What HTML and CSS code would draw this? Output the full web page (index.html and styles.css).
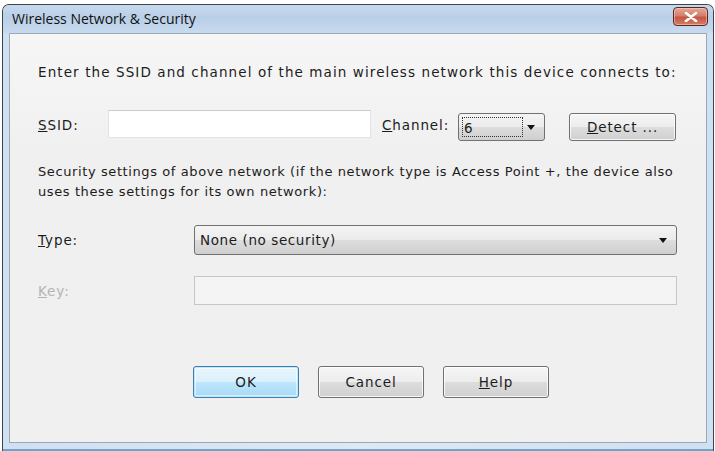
FILE: index.html
```html
<!DOCTYPE html>
<html>
<head>
<meta charset="utf-8">
<title>Wireless Network &amp; Security</title>
<link rel="stylesheet" href="styles.css">
</head>
<body>
<div class="window">
  <div class="titlebar">
    <span class="title">Wireless Network &amp; Security</span>
    <button class="close" aria-label="Close">
      <svg width="14" height="10" viewBox="0 0 14 10"><path d="M2 1 L12 9 M12 1 L2 9" stroke="#fff" stroke-width="2.6" stroke-linecap="round"/></svg>
    </button>
  </div>
  <div class="frame">
    <div class="client">
      <p class="intro">Enter the SSID and channel of the main wireless network this device connects to:</p>
      <div class="row row-ssid">
        <label class="label lbl-ssid"><u>S</u>SID:</label>
        <div class="edit edit-ssid"></div>
        <label class="label lbl-channel"><u>C</u>hannel:</label>
        <div class="combo combo-channel"><span class="focus">6</span><span class="arrow"></span></div>
        <button class="btn btn-detect"><u>D</u>etect ...</button>
      </div>
      <p class="sec">Security settings of above network (if the network type is Access Point +, the device also<br>uses these settings for its own network):</p>
      <div class="row row-type">
        <label class="label lbl-wide"><u>T</u>ype:</label>
        <div class="combo combo-type"><span class="val">None (no security)</span><span class="arrow"></span></div>
      </div>
      <div class="row row-key">
        <label class="label lbl-wide disabled"><u>K</u>ey:</label>
        <div class="edit edit-key"></div>
      </div>
      <div class="buttons">
        <button class="btn btn-default">OK</button>
        <button class="btn">Cancel</button>
        <button class="btn"><u>H</u>elp</button>
      </div>
    </div>
  </div>
</div>
</body>
</html>
```

FILE: styles.css
```css
html, body {
  margin: 0;
  padding: 0;
  background: #ffffff;
}
body {
  width: 715px;
  height: 451px;
  overflow: hidden;
  font-family: "DejaVu Sans", Verdana, sans-serif;
  font-size: 13.5px;
  letter-spacing: 0.9px;
  color: #1c1c1c;
}
.window {
  margin: 4px 1px 0 2px;
  height: 446px;
  border: 1px solid #3b4450;
  border-bottom: none;
  border-radius: 7px 7px 0 0;
  background: linear-gradient(to bottom, #bcd2ea 0px, #d3e2f2 20px, #dbe8f5 40px, #e0ebf6 100%);
  display: flex;
  flex-direction: column;
  overflow: hidden;
}
.titlebar {
  height: 28px;
  display: flex;
  align-items: center;
  justify-content: space-between;
  padding: 0 5px 0 9px;
  background: linear-gradient(to bottom, #c7d9ee 0%, #b9cfe8 45%, #c8daee 100%);
}
.title {
  font-family: "Open Sans", "Noto Sans", sans-serif;
  font-size: 14px;
  letter-spacing: 0;
  color: #111;
  margin-top: -2px;
}
.close {
  width: 35px;
  height: 19px;
  margin-top: -5px;
  padding: 0;
  border: 1px solid #5b2620;
  border-radius: 4px;
  background: linear-gradient(to bottom, #e4a797 0%, #d47f6d 45%, #c45642 55%, #d77d66 100%);
  display: flex;
  align-items: center;
  justify-content: center;
  box-shadow: inset 0 0 0 1px rgba(255,220,210,0.5);
}
.frame {
  flex: 1;
  padding: 0 6px 6px 6px;
  background: linear-gradient(to right, #cfe0f1, #dde9f5 50%, #cfe0f1);
  border-bottom: 2px solid #6ea6c8;
}
.client {
  height: 100%;
  box-sizing: border-box;
  border: 1px solid #9aa8b8;
  background: linear-gradient(to bottom, #f6f6f6 0%, #f0f0f0 30%, #f0f0f0 100%);
  padding: 29px 28px 0 28px;
}
.intro {
  margin: 0;
  line-height: 18px;
  white-space: nowrap;
  letter-spacing: 1.1px;
}
.row {
  display: flex;
  align-items: center;
}
.row-ssid {
  margin-top: 29px;
  height: 30px;
}
.label {
  flex: none;
}
.lbl-ssid { width: 70px; }
.lbl-channel { margin-left: 11px; width: 76px; }
.lbl-wide { width: 156px; }
.disabled { color: #b4b4b4; }
.edit {
  box-sizing: border-box;
  background: #fff;
  border: 1px solid #abadb3;
  border-top-color: #e3e3e3;
}
.edit-ssid {
  width: 263px;
  height: 28px;
  border-color: #e2e3ea;
  border-top-color: #c9ccd1;
  margin-top: -2px;
}
.edit-key {
  width: 483px;
  height: 29px;
  background: #f4f4f4;
  border-color: #c6c6c6;
}
.combo {
  box-sizing: border-box;
  position: relative;
  border: 1px solid #707070;
  border-radius: 3px;
  background: linear-gradient(to bottom, #f4f4f4 0%, #ebebeb 50%, #dddddd 51%, #cfcfcf 100%);
  display: flex;
  align-items: center;
}
.combo-channel {
  width: 87px;
  height: 28px;
  margin-top: 3px;
  padding-left: 3px;
}
.focus {
  display: block;
  width: 61px;
  height: 20px;
  line-height: 20px;
  box-sizing: border-box;
  border: 1px dotted #333;
  padding-left: 1px;
}
.combo-type {
  width: 483px;
  height: 30px;
  padding-left: 5px;
  letter-spacing: 0.6px;
}
.arrow {
  position: absolute;
  right: 9px;
  top: 50%;
  margin-top: -2px;
  width: 0;
  height: 0;
  border-left: 4px solid transparent;
  border-right: 4px solid transparent;
  border-top: 5px solid #111;
}
.btn {
  box-sizing: border-box;
  width: 107px;
  height: 28px;
  padding: 0;
  font-family: inherit;
  font-size: inherit;
  letter-spacing: inherit;
  color: #1c1c1c;
  border: 1px solid #707070;
  border-radius: 3px;
  background: linear-gradient(to bottom, #f6f6f6 0%, #ececec 50%, #dddddd 51%, #d0d0d0 100%);
  box-shadow: inset 0 0 0 1px rgba(255,255,255,0.8);
}
.btn-detect {
  margin-left: 24px;
  margin-top: 3px;
}
.row-type {
  margin-top: 23px;
  height: 30px;
}
.row-key {
  margin-top: 21px;
  height: 29px;
}
.sec {
  margin: 22px 0 0 0;
  line-height: 20px;
  font-size: 13px;
  letter-spacing: 0.6px;
  white-space: nowrap;
}
.buttons {
  margin-top: 61px;
  padding-left: 155px;
  display: flex;
  gap: 19px;
}
.buttons .btn {
  width: 106px;
  height: 32px;
}
.buttons .btn-default {
  border-color: #3c7fb1;
  background: linear-gradient(to bottom, #eaf6fd 0%, #d9f0fc 50%, #bee6fd 51%, #a7d9f5 100%);
  box-shadow: inset 0 0 0 1px #bfe6fb, inset 0 0 0 2px rgba(255,255,255,0.5);
}
```
